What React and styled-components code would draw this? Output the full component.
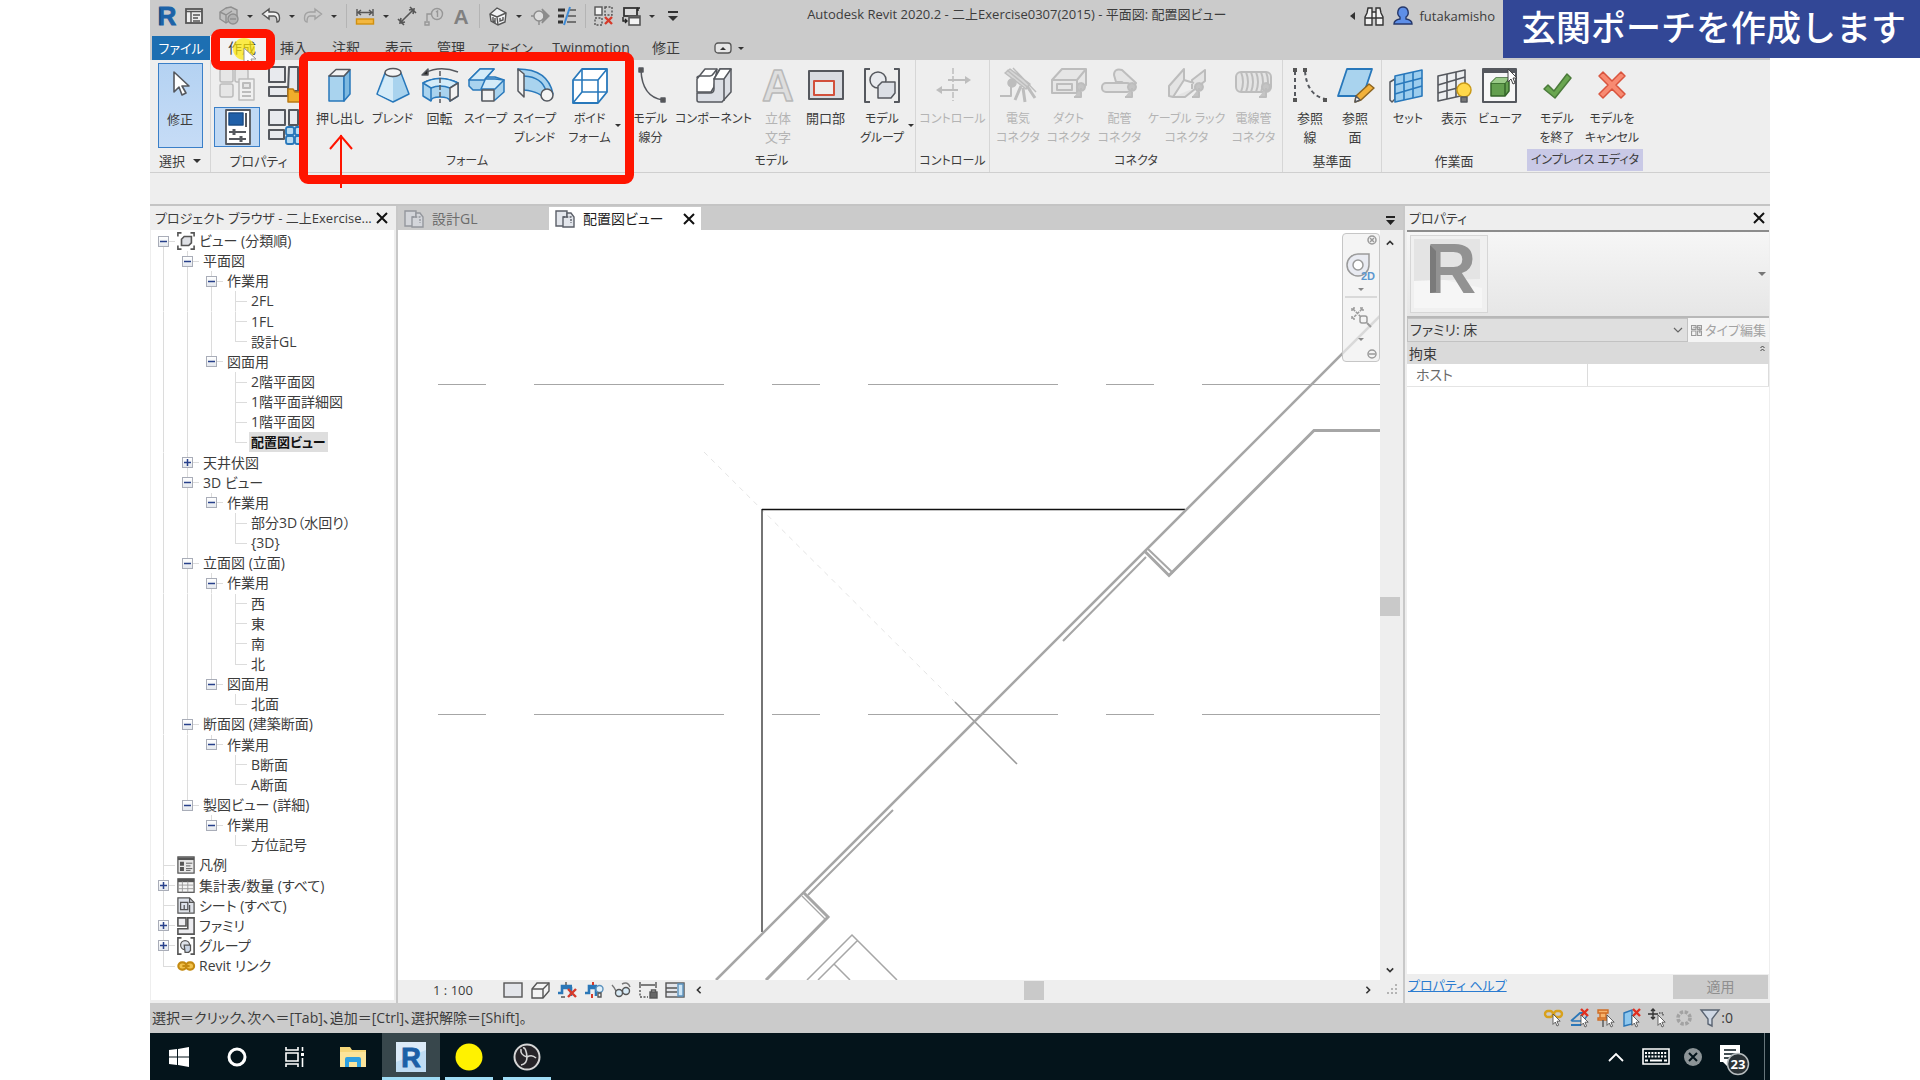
import React from 'react';
import styled, { createGlobalStyle, css } from 'styled-components';

const GlobalStyle = createGlobalStyle`
  * {
    box-sizing: border-box;
  }

  body {
    margin: 0;
    background: #ffffff;
    color: #3c3c3c;
    font-family: "Open Sans", "Noto Sans CJK JP", sans-serif;
    font-size: 14px;
    line-height: 20px;
    font-feature-settings: "palt";
  }

  button, input, select {
    font: inherit;
    font-feature-settings: inherit;
    color: inherit;
    margin: 0;
    padding: 0;
    border: 0;
    background: none;
  }

  svg {
    display: block;
    flex: none;
    overflow: visible;
  }
`;

const Page = styled.div`
  position: relative;
  min-height: 100vh;
  overflow: hidden;
`;

const Window = styled.div`
  position: relative;
  display: flex;
  flex-direction: column;
  height: 100vh;
  margin: 0 150px;
  background: #eeeeee;
`;

/* ---------- title bar ---------- */

const TitleBar = styled.header`
  display: flex;
  align-items: center;
  height: 36px;
  padding: 0 275px 4px 7px;
  background: #cbcbcb;
`;

const QuickAccess = styled.div`
  display: flex;
  align-items: center;
  gap: 7px;
`;

const QuickButton = styled.button`
  display: flex;
  width: ${(p) => (p.$arrow ? '8px' : '20px')};
  justify-content: center;
  margin-left: ${(p) => (p.$spaced ? '8px' : '0')};
`;

const QuickDivider = styled.span`
  width: 1px;
  height: 24px;
  margin: 0 1px;
  background: #b4b4b4;
`;

const Title = styled.h1`
  flex: 1;
  margin: 0;
  padding-bottom: 5px;
  font-size: 13px;
  font-weight: 400;
  line-height: 20px;
  text-align: center;
  white-space: nowrap;
`;

const Account = styled.div`
  display: flex;
  align-items: center;
  gap: 9px;
  font-size: 13px;
`;

const AccountButton = styled.button`
  display: flex;
  align-items: center;
  gap: 6px;
`;

/* ---------- ribbon ---------- */

const Tabs = styled.nav`
  display: flex;
  height: 24px;
  padding-left: 2px;
  background: #cbcbcb;
`;

const Tab = styled.button`
  width: ${(p) => p.$w}px;
  font-size: ${(p) => (p.$kana ? '13px' : '14px')};
  line-height: 24px;
  white-space: nowrap;
  ${(p) => p.$file && css`
    background: #1d6fb2;
    color: #ffffff;
  `}
  ${(p) => p.$active && css`
    background: #f2f2f2;
  `}
`;

const TabToggle = styled.button`
  display: flex;
  align-items: center;
  gap: 6px;
  margin-left: 26px;
`;

const Ribbon = styled.div`
  display: flex;
  height: 113px;
  background: #eeeeee;
  border-bottom: 1px solid #cfcfcf;
`;

const RibbonPanel = styled.section`
  display: flex;
  flex-direction: column;
  width: ${(p) => p.$w}px;
  border-right: 1px solid ${(p) => (p.$last ? 'transparent' : '#d6d6d6')};
`;

const PanelTools = styled.div`
  display: flex;
  flex: 1;
  justify-content: center;
`;

const PanelName = styled.div`
  display: flex;
  align-items: center;
  justify-content: center;
  gap: 8px;
  height: 22px;
  font-size: ${(p) => (p.$kana ? '12px' : '13px')};
  line-height: 22px;
  white-space: nowrap;
  ${(p) => p.$accent && css`
    background: #c9c9e6;
    margin: 0 0 1px 0;
  `}
`;

const Tool = styled.button`
  position: relative;
  display: flex;
  flex-direction: column;
  align-items: center;
  width: ${(p) => p.$w}px;
  padding-top: 6px;
  font-size: ${(p) => (p.$kana ? '12px' : '13px')};
  line-height: 19px;
  white-space: nowrap;
  color: ${(p) => (p.disabled ? '#b4b4b4' : '#3c3c3c')};
`;

const ToolLabel = styled.span`
  margin-top: 5px;
  white-space: pre;
`;

const ToolArrow = styled.span`
  position: absolute;
  right: 0;
  top: 64px;
`;

const ModifyTool = styled(Tool)`
  height: 85px;
  margin-top: 3px;
  padding-top: 3px;
  border: 1px solid #3a7fc8;
  background: linear-gradient(#b4d2f2, #c6dcf6);
`;

const PropertyTools = styled.div`
  display: grid;
  flex: 1;
  grid-template-columns: 46px 46px;
  grid-auto-rows: 40px;
  gap: 3px 2px;
  padding: 4px 0 0 3px;
`;

const PropertyTool = styled.button`
  display: flex;
  align-items: center;
  justify-content: center;
  border: 1px solid ${(p) => (p.$active ? '#3a7fc8' : 'transparent')};
  background: ${(p) => (p.$active ? '#c0d9f4' : 'none')};
`;

const OptionsBar = styled.div`
  height: 33px;
  background: #eeeeee;
  border-bottom: 2px solid #c4c4c4;
`;

/* ---------- docked panels ---------- */

const Workspace = styled.div`
  display: flex;
  flex: 1;
  min-height: 0;
`;

const PanelHeader = styled.div`
  display: flex;
  align-items: center;
  justify-content: space-between;
  height: 24px;
  padding: 0 ${(p) => (p.$tight ? '0 0 2px' : '4px')};
  font-size: 13px;
  line-height: 24px;
  white-space: nowrap;
`;

const CloseButton = styled.button`
  display: flex;
  padding: 4px;
`;

const Browser = styled.aside`
  display: flex;
  flex-direction: column;
  width: 248px;
  padding: 0 2px 3px 1px;
  border-right: 2px solid #c8c8c8;
`;

const Tree = styled.ul`
  display: flex;
  flex: 1;
  flex-direction: column;
  margin: 0;
  padding: 1px 0 24px;
  list-style: none;
  background: #ffffff;
`;

const TreeRow = styled.li`
  display: flex;
  flex: 1;
  align-items: stretch;
  min-height: 0;
`;

const line = 'linear-gradient(#dcdcdc, #dcdcdc) no-repeat';
const up = `${line} 50% 0 / 1px 50%`;
const down = `${line} 50% 100% / 1px 50%`;
const side = `${line} 100% 50% / 50% 1px`;
const guides = {
  b: `${down}, ${side}`,
  v: `${up}, ${down}`,
  t: `${up}, ${down}, ${side}`,
  l: `${up}, ${side}`,
  e: 'none',
};

const Guide = styled.span`
  display: flex;
  align-items: center;
  justify-content: center;
  width: 24px;
  background: ${(p) => guides[p.$kind]};
`;

const Expander = styled.button`
  display: flex;
  align-items: center;
  justify-content: center;
  width: 11px;
  height: 11px;
  border: 1px solid #a9adb8;
  background: linear-gradient(#ffffff, #e4e8ee);
`;

const TreeLabel = styled.span`
  display: flex;
  align-items: center;
  align-self: center;
  gap: 4px;
  height: 20px;
  margin-left: 2px;
  padding: 0 2px;
  white-space: nowrap;
  ${(p) => p.$icon && css`
    margin-left: 0;
  `}
  ${(p) => p.$selected && css`
    background: #dedede;
    font-size: 13px;
    font-weight: 700;
    color: #111111;
  `}
`;

const View = styled.main`
  display: flex;
  flex: 1;
  flex-direction: column;
  min-width: 0;
  padding-bottom: 3px;
`;

const DocumentTabs = styled.div`
  display: flex;
  align-items: flex-end;
  height: 24px;
  background: #cbcbcb;
`;

const DocumentTab = styled.button`
  display: flex;
  align-items: center;
  gap: 8px;
  width: ${(p) => p.$w}px;
  height: 23px;
  padding: 0 6px;
  color: ${(p) => (p.$active ? '#1e1e1e' : '#6c6c6c')};
  background: ${(p) => (p.$active ? '#ffffff' : 'none')};

  svg:last-child:not(:first-child) {
    margin-left: auto;
  }
`;

const TabMenu = styled.button`
  margin: 0 7px 4px auto;
`;

const ViewBody = styled.div`
  display: flex;
  flex: 1;
  min-height: 0;
`;

const Canvas = styled.div`
  position: relative;
  flex: 1;
  min-width: 0;
  overflow: hidden;
  background: #ffffff;
`;

const Drawing = styled.svg`
  width: 100%;
  height: 100%;
  fill: none;
  stroke: #a6a6a6;
`;

const NavigationBar = styled.div`
  position: absolute;
  top: 3px;
  right: 0;
  width: 38px;
  height: 129px;
  border: 1px solid #c6c6c6;
  border-radius: 4px;
  background: rgba(240, 240, 240, 0.7);
`;

const VerticalScroll = styled.div`
  display: flex;
  flex-direction: column;
  align-items: center;
  justify-content: space-between;
  width: 23px;
  padding: 9px 3px 6px 0;
  background: #eeeeee;
`;

const Thumb = styled.div`
  width: 20px;
  height: 19px;
  background: #c9c9c9;
`;

const ViewControls = styled.div`
  display: flex;
  align-items: center;
  gap: 7px;
  height: 20px;
  padding: 0 4px 0 35px;
  background: #eeeeee;
`;

const Scale = styled.button`
  width: 40px;
  margin-right: 23px;
  font-size: 13px;
  white-space: nowrap;
`;

const HorizontalScroll = styled.div`
  display: flex;
  flex: 1;
  align-items: center;
  justify-content: space-between;
  padding: 0 8px 0 3px;
`;

const Properties = styled.aside`
  display: flex;
  flex-direction: column;
  width: 367px;
  padding: 0 1px 2px 2px;
  border-left: 2px solid #c8c8c8;
`;

const TypeSelector = styled.button`
  display: flex;
  align-items: center;
  justify-content: space-between;
  height: 88px;
  padding: 0 3px;
  border-top: 2px solid #8c8c8c;
  border-bottom: 2px solid #b8b8b8;
  background: linear-gradient(#f6f6f6, #e6e6e6);
`;

const FamilyRow = styled.div`
  display: flex;
  height: 24px;
  background: #f4f4f4;
`;

const FamilyBox = styled.label`
  display: flex;
  flex: 1;
  align-items: center;
  padding-right: 4px;
  border: 1px solid #c2c2c2;
  background: #dfdfdf;
`;

const FamilySelect = styled.select`
  flex: 1;
  appearance: none;
  padding-left: 2px;
`;

const EditType = styled.button`
  display: flex;
  align-items: center;
  justify-content: center;
  gap: 3px;
  width: 81px;
  font-size: 13px;
  color: #a3a3a3;
`;

const PropertyArea = styled.div`
  flex: 1;
  background: #ffffff;
`;

const PropertyTable = styled.table`
  width: 100%;
  border-collapse: collapse;

  th, td {
    height: 22px;
    padding: 0 2px;
    font-weight: 400;
    text-align: left;
    line-height: 21px;
  }

  thead th {
    background: #dadada;
  }

  thead svg {
    float: right;
    margin: 2px 2px 0 0;
  }

  tbody th {
    width: 50%;
    padding-left: 9px;
    color: #6a6a6a;
    border-right: 1px solid #dcdcdc;
    border-bottom: 1px solid #e4e4e4;
  }

  tbody td {
    border-right: 1px solid #dcdcdc;
    border-bottom: 1px solid #e4e4e4;
  }
`;

const CellInput = styled.input`
  width: 100%;
  height: 18px;
`;

const PropertiesFooter = styled.div`
  display: flex;
  align-items: flex-start;
  justify-content: space-between;
  height: 27px;
  padding: 1px 1px 0;
`;

const HelpLink = styled.a`
  font-size: 13px;
  color: #2a7bd0;
`;

const ApplyButton = styled.button`
  width: 95px;
  height: 24px;
  background: #cbcbcb;
  color: #8f8f8f;
`;

const StatusBar = styled.footer`
  display: flex;
  align-items: center;
  justify-content: space-between;
  height: 30px;
  padding: 0 37px 0 2px;
  background: #cbcbcb;
`;

const StatusTools = styled.div`
  display: flex;
  align-items: center;
  gap: 6px;
`;

const FilterCount = styled.span`
  margin-left: -5px;
`;

/* ---------- task bar ---------- */

const Taskbar = styled.div`
  display: flex;
  justify-content: space-between;
  height: 47px;
  background: #04141b;
`;

const TaskGroup = styled.div`
  display: flex;
`;

const TaskButton = styled.button`
  display: flex;
  align-items: center;
  justify-content: center;
  width: 58px;
  background: ${(p) => (p.$active ? '#38474c' : 'none')};
  ${(p) => p.$running && css`
    background: linear-gradient(#9fdcf5, #9fdcf5) no-repeat 50% 100% / 48px 3px;
  `}
  ${(p) => p.$active && css`
    background: linear-gradient(#9fdcf5, #9fdcf5) no-repeat 50% 100% / 58px 3px #38474c;
  `}
`;

const Tray = styled.div`
  display: flex;
  align-items: center;
  gap: 14px;
  padding-right: 5px;
`;

const TrayButton = styled.button`
  display: flex;
`;

const ShowDesktop = styled.span`
  width: 1px;
  height: 47px;
  background: #66757b;
`;

/* ---------- lesson annotations over the window ---------- */

const Caption = styled.div`
  position: absolute;
  top: 0;
  right: 0;
  padding: 0 14px 6px 18px;
  background: #324796;
  color: #ffffff;
  font-family: "Noto Sans CJK JP", sans-serif;
  font-size: 35px;
  font-weight: 500;
  font-feature-settings: normal;
  line-height: 52px;
  white-space: nowrap;
`;

const Highlight = styled.div`
  position: absolute;
  top: ${(p) => p.$top}px;
  left: ${(p) => p.$left}px;
  width: ${(p) => p.$w}px;
  height: ${(p) => p.$h}px;
  border: 9px solid #ff1400;
  border-radius: 9px;
  pointer-events: none;
`;

const Pointer = styled.svg`
  position: absolute;
  top: ${(p) => p.$top}px;
  left: ${(p) => p.$left}px;
  pointer-events: none;
`;

/* ---------- icons ---------- */

const Small = ({ children, size = 20 }) => (
  <svg width={size} height={size} viewBox="0 0 20 20" fill="none" stroke="#555" strokeWidth="1.4" aria-hidden="true">
    {children}
  </svg>
);

const Large = ({ children }) => (
  <svg width="38" height="38" viewBox="0 0 38 38" fill="none" stroke="#55585e" strokeWidth="1.5" strokeLinejoin="round" aria-hidden="true">
    {children}
  </svg>
);

const Caret = ({ color = '#333', size = 8 }) => (
  <svg width={size} height={size / 2} viewBox="0 0 8 4" aria-hidden="true">
    <path d="M0 0h8L4 4z" fill={color} />
  </svg>
);

const Cross = () => (
  <svg width="12" height="12" viewBox="0 0 12 12" stroke="#111" strokeWidth="2" aria-hidden="true">
    <path d="M1 1l10 10M11 1L1 11" />
  </svg>
);

const Chevron = ({ d, size = 10, color = '#333', w = 2 }) => (
  <svg width={size} height={size} viewBox="0 0 10 10" fill="none" stroke={color} strokeWidth={w} aria-hidden="true">
    <path d={d} />
  </svg>
);

const Cursor = <path d="M0 0v13l3-3 2 5 2-1-2-5h4z" fill="#fff" stroke="#444" strokeWidth="1" />;

const RevitLogo = ({ size, fill = '#1c63a8' }) => (
  <svg width={size} height={size} viewBox="0 0 24 24" aria-hidden="true">
    <text x="12" y="22" textAnchor="middle" fontFamily="Liberation Sans" fontWeight="700" fontSize="28" fill={fill} stroke={fill}>R</text>
    <path d="M3 2v20h2V4z" fill="#000" opacity="0.25" />
  </svg>
);

const quick = {
  home: <RevitLogo size={22} />,
  sheet: <Small><rect x="2" y="3" width="16" height="14" fill="#eee" strokeWidth="1.8" /><path d="M2 5.500h16M7 6v11M9 9h7M9 12h5M9 15h7" /></Small>,
  box: (
    <Small>
      <g stroke="#8f8f8f" fill="#c0c0c0">
        <path d="M1 6l6-4 6 3v8l-6 4-6-4z" />
        <path d="M7 2l5-1 6 3v7l-5 2" />
        <path d="M1 6l6 3 6-4M7 9v8" />
        <circle cx="14" cy="13" r="5" fill="#b2b2b2" />
        <path d="M11 13h6" />
      </g>
    </Small>
  ),
  undo: <Small><path d="M8 3L1.500 8 8 13v-3h5q3 0 3 6 2.500 0 2.500-4 0-6-6-6H8z" fill="#f2f2f2" /></Small>,
  redo: <Small><path d="M12 3l6.500 5L12 13v-3H7q-3 0-3 6-2.500 0-2.500-4 0-6 6-6H12z" stroke="#a2a2a2" /></Small>,
  measure: <Small><rect x="1.500" y="13" width="17" height="5" fill="#f3b73f" stroke="#d09010" /><path d="M2 3v7M18 3v7M3 6.500h14M6 4L3 6.500 6 9M14 4l3 2.500L14 9" /></Small>,
  dimension: <Small><path d="M3 17L17 3M1 13l6 6M13 1l6 6M4 12l-1 5 5-1M12 4l5-1-1 5" strokeWidth="1.600" /></Small>,
  tag: <Small><g stroke="#979797"><circle cx="13" cy="8" r="5.500" /><path d="M12 6l1.500-1v6M8 8H3v7M1 16h4v3H1z" /></g></Small>,
  text: <Small><text x="10" y="18" textAnchor="middle" fontFamily="Liberation Sans" fontWeight="700" fontSize="21" fill="#808080" stroke="none">A</text></Small>,
  house: <Small><path d="M2 8l7-6 9 5-1 9-7 3-7-4z" fill="#f4f5f7" /><path d="M2 8l7 3 9-4M9 11l1 8M5 11v4l2 1v-4M12 12v3l3-1v-3" /></Small>,
  section: <Small><circle cx="9" cy="10" r="5" stroke="#8c8c8c" fill="#ddd" /><path d="M12 3l7 7-7 7q4-7 0-14zM9 15v4M1 10h3" fill="#8c8c8c" stroke="#8c8c8c" /></Small>,
  lines: <Small><path d="M1 4h7M1 10h6M1 16h5" stroke="#333" strokeWidth="3" /><path d="M12 4h7M11 10h8M10 16h9" /><path d="M13 1L7 19" stroke="#3c8bd8" strokeWidth="2" /></Small>,
  hidden: <Small><rect x="1" y="1" width="7" height="8" fill="#f4f4f4" /><rect x="11" y="1" width="7" height="8" strokeDasharray="2 1.500" /><rect x="1" y="12" width="7" height="7" strokeDasharray="2 1.500" /><path d="M11 11l7 7M18 11l-7 7" stroke="#d63a2a" strokeWidth="2.400" /></Small>,
  swap: <Small><rect x="3" y="2" width="13" height="8" fill="#ddd" strokeWidth="1.800" stroke="#333" /><rect x="8" y="10" width="11" height="9" fill="#f4f4f4" strokeWidth="1.600" /><path d="M8 11.500h11" strokeWidth="2" /><path d="M2 11v4h4M4 13l2 2-2 2M17 5V2h2" stroke="#222" /></Small>,
  more: <Small><path d="M5 6h10" strokeWidth="2" stroke="#333" /><path d="M5 10h10l-5 5z" fill="#333" stroke="none" /></Small>,
};

const blue = '#a9d3ee';
const pale = '#d4ebf8';
const edge = '#2878bb';

const Connector = <path d="M31 22v9H24M31 17a4 4 0 1 1-.1 0" fill="#c4c4c4" stroke="#bdbdbd" strokeWidth="2" />;

const art = {
  arrow: <Large><path d="M13 5v20l5-5 3 8 4-2-4-7h7z" fill="#fff" strokeWidth="1.600" /></Large>,
  extrusion: <Large><path d="M8 10h15v25H8z" fill={blue} stroke={edge} /><path d="M23 10l6-6v24l-6 7z" fill="#7db9e0" stroke={edge} /><path d="M8 10l7-6.500h14L23 10z" fill="#f3f3f3" /></Large>,
  blend: <Large><path d="M11 7L3 28l16 8 16-8-8-21z" fill={blue} stroke={edge} /><path d="M12 9L4 28l15 7V12z" fill={pale} stroke="none" /><ellipse cx="19" cy="6.500" rx="8" ry="4" fill="#f4f4f4" /></Large>,
  revolve: <Large><path d="M2 17q17-9 35 0v13l-8 5q-1-4-10-4t-9 4l-8-5z" fill={blue} stroke={edge} /><path d="M2 17q17-9 35 0l-8 5q-10-4-19 0z" fill={pale} stroke={edge} /><path d="M10 22v13" stroke={edge} /><path d="M29 22l8-5v13l-8 5z" fill="#f2f2f2" /><path d="M19 5v32" strokeDasharray="5 2" /><path d="M4 7q15-8 33-1" /><path d="M1 9l6-6v6z" fill="#222" /></Large>,
  sweep: <Large><path d="M2 14L13 3h14l-7 8h8l9 3v12l-9 8H15V24H6l-4-4z" fill={blue} stroke={edge} /><path d="M2 14L13 3h14l-9 10h10l9 1-9 9H14l4-9z" fill={pale} stroke={edge} /><rect x="15" y="24" width="12" height="11" fill="#f2f2f2" /></Large>,
  sweptBlend: <Large><path d="M2 3q30 0 35 25l-9 6q-2-8-20-10z" fill={blue} stroke={edge} /><path d="M8 10q18 1 22 15" stroke={edge} fill="none" /><path d="M2 3l6 5v23l-6-6z" fill="#f2f2f2" /><circle cx="31" cy="29" r="6" fill="#f4f4f4" /></Large>,
  voidForm: <Large><path d="M2 14L11 3h25v23l-9 11H2z" fill="#fff" stroke={edge} strokeWidth="1.800" /><path d="M2 14h25v23M27 14l9-11M11 3v23h25M11 26L2 37" stroke={edge} strokeWidth="1.600" /></Large>,
  modelLine: <Large><path d="M9 4q1 27 22 30" /><path d="M1 4v30" strokeWidth="2" /><rect x="7" y="2" width="4" height="4" fill="#555" /><rect x="29" y="32" width="4" height="4" fill="#555" /></Large>,
  component: <Large><path d="M2 13l8-10h12l-3 18-3 5H2z" fill="#fff" /><path d="M2 12q0-2 3-2h10q2 0 4-3l3-4" /><path d="M2 27h13q4 0 4-4V13l6-10h11v23l-9 10H4q-2 0-2-2z" fill="#dcdfe5" /><path d="M19 13l6-10h11l-7 10zM29 13v22" fill="#fff" /></Large>,
  modelText: <Large><text x="19" y="35" textAnchor="middle" fontFamily="Liberation Sans" fontWeight="700" fontSize="44" fill="#dedede" stroke="#b9b9b9" strokeWidth="1.500">A</text></Large>,
  opening: <Large><rect x="2" y="5" width="34" height="28" fill="#d9dce2" strokeWidth="2" /><rect x="7" y="15" width="20" height="14" fill="#eee" stroke="#d2503c" strokeWidth="2" /></Large>,
  group: <Large><path d="M7 3H2v33h5M31 3h5v33h-5" strokeWidth="2" /><circle cx="15" cy="14" r="8" fill="#e8eaee" /><path d="M15 20l4-4h13v11l-4 5H15z" fill="#dcdfe5" /></Large>,
  control: <Large><path d="M19 2v33" stroke="#bdbdbd" strokeDasharray="6 2" /><path d="M14 14h17M7 24h17" stroke="#bdbdbd" strokeWidth="2" /><path d="M31 10l6 4-6 4zM8 20l-6 4 6 4z" fill="#bdbdbd" stroke="none" /></Large>,
  electric: <Large><g stroke="#bdbdbd" fill="#d6d6d6"><path d="M8 4l24 20M14 2l23 24M6 7l5-4 20 15-4 5z" /><path d="M24 22l2 14M28 20l8 12M22 20l-6 14" strokeWidth="3" /><circle cx="13" cy="17" r="4" fill="#bdbdbd" /><path d="M12 21v9H1" fill="none" strokeWidth="2" /></g></Large>,
  duct: <Large><g stroke="#bdbdbd"><path d="M2 14L12 3h24v16l-9 8H2z" fill="#e6e6e6" strokeWidth="2" /><path d="M2 14h25l9-11M27 14v13M7 18h15v6H7z" strokeWidth="2" />{Connector}</g></Large>,
  pipe: <Large><g stroke="#bdbdbd" strokeWidth="2" fill="#e4e4e4"><path d="M13 9q0-7 8-5l14 13-6 7-8-8h-6z" /><rect x="1" y="17" width="29" height="9" rx="4" />{Connector}</g></Large>,
  cable: <Large><g stroke="#bdbdbd" strokeWidth="2" fill="#e4e4e4"><path d="M1 20L16 3v11L5 31l-4-1zM16 14l10 3M5 31h12l20-16V4L24 14v9" />{Connector}</g></Large>,
  conduit: <Large><g stroke="#bdbdbd" strokeWidth="2" fill="#e4e4e4"><rect x="1" y="6" width="35" height="20" rx="5" /><path d="M6 6q4 10 0 20M11 6q4 10 0 20M16 6q4 10 0 20M21 6q4 10 0 20M26 6q4 10 0 20M31 6q4 10 0 20" fill="none" />{Connector}</g></Large>,
  referenceLine: <Large><path d="M4 5v28M14 5q2 24 20 28" strokeWidth="2" strokeDasharray="4 3" /><path d="M2 2h4v4H2zM12 2h4v4h-4zM2 32h4v4H2zM32 32h4v4h-4z" fill="#555" stroke="none" /></Large>,
  referencePlane: <Large><path d="M11 3h25L27 30H2z" fill={blue} stroke={edge} strokeWidth="1.800" /><path d="M19 36l1-6 13-12 5 4-13 12z" fill="#f2b13a" stroke="#8c6420" /><path d="M19 36l1-6 4 4z" fill="#fff" /></Large>,
  set: <Large><path d="M1 16l5-3v20l-3 3-2-2z" fill="#eee" /><path d="M6 10l27-6v26L6 36z" fill="#9ccdee" stroke={edge} strokeWidth="1.600" /><path d="M15 8v26M24 6v26M6 19l27-7M6 28l27-8" stroke={edge} strokeWidth="1.600" /></Large>,
  show: <Large><path d="M3 10l27-6v25L3 35z" fill="#eceef0" strokeWidth="1.600" /><path d="M12 8v25M21 6v25M3 19l27-8M3 27l27-7" strokeWidth="1.600" /><circle cx="29" cy="24" r="7" fill="#ffd84a" stroke="#c99a18" /><path d="M26 31h6v5h-6z" fill="#777" /></Large>,
  viewer: <Large><rect x="2" y="3" width="33" height="33" fill="#f7f7f7" strokeWidth="2" /><path d="M2 5h33" strokeWidth="4" /><path d="M10 17l5-5h13v13l-4 5H10z" fill="#64a04f" stroke="#35662a" /><path d="M10 17h14l4-5M24 17v13" stroke="#35662a" /><path d="M15 12h13l-4 5H10z" fill="#9bcb88" stroke="none" /><g transform="translate(27 3)">{Cursor}</g></Large>,
  finish: <Large><path d="M6 23l4-4 6 6L29 8l4 4-16 20z" fill="#6aa650" stroke="#4a7a3a" /></Large>,
  cancel: <Large><path d="M10 6l9 9 9-9 4 4-9 9 9 9-4 4-9-9-9 9-4-4 9-9-9-9z" fill="#f88a72" stroke="#d9543e" /></Large>,
};

const propertyArt = [
  <Large key="a"><g stroke="#bcbcbc" fill="#e6e6e6"><rect x="2" y="4" width="13" height="13" rx="2" /><rect x="17" y="4" width="13" height="13" rx="2" /><rect x="2" y="19" width="13" height="13" rx="2" /><rect x="21" y="14" width="15" height="21" fill="#f0f0f0" /><path d="M25 18h7v5h-7zM24 27h9M24 31h9" strokeWidth="2" /></g></Large>,
  <Large key="b"><path d="M3 2h16v15H3zM3 22h19v9H3zM23 2h9v24H22z" fill="#e8eaee" strokeWidth="2" /><path d="M22 24h5l2 3h9v10H22z" fill="#f0ad2c" stroke="#b87a14" /></Large>,
  <Large key="c"><rect x="8" y="2" width="24" height="34" fill="#fff" strokeWidth="1.800" /><rect x="11" y="5" width="14" height="12" fill="#1f5fa8" stroke="#1b4e88" /><path d="M28 5v14M11 24h17M11 31h17" strokeWidth="2" /><path d="M16 21v6M23 28v6" strokeWidth="3" /></Large>,
  <Large key="d"><path d="M3 2h16v15H3zM3 22h15v9H3zM23 2h9v15h-9z" fill="#e8eaee" strokeWidth="2" /><g fill="#b9dcf2" stroke={edge} strokeWidth="1.800"><rect x="20" y="19" width="8" height="8" rx="2" /><rect x="29" y="19" width="8" height="8" rx="2" /><rect x="20" y="28" width="8" height="8" rx="2" /><rect x="29" y="28" width="8" height="8" rx="2" /></g></Large>,
];

const treeArt = {
  views: <Small size={18}><path d="M1 5V1h4M15 1h4v4M19 15v4h-4M5 19H1v-4" strokeWidth="1.800" /><path d="M5 8l3-3h8v7l-3 3H5z" fill="#dfe1e6" strokeWidth="1.800" /></Small>,
  legend: <Small size={18}><rect x="1" y="1" width="18" height="18" fill="#e8e8e8" /><path d="M1 3h18" strokeWidth="3" /><path d="M4 7h3v3H4zM4 13h3v3H4z" fill="#555" /><path d="M10 8h7M10 11h5M10 14h7M10 16h5" strokeWidth="1" /></Small>,
  schedule: <Small size={18}><rect x="1" y="2" width="18" height="15" fill="#f4f4f4" /><path d="M1 4h18" strokeWidth="3.500" /><path d="M1 9h18M1 13h18M6 5v12M12 5v12" stroke="#999" strokeWidth="1" /></Small>,
  sheet: <Small size={18}><path d="M1 1h13l5 5v12H1z" fill="#dfe3ea" /><path d="M4 6h8v8H4zM8 9v5M14 1v5h5M14 9v8" /></Small>,
  family: <Small size={18}><path d="M1 1h9v9H1zM1 13h11V1h7v18H1z" fill="#ececf0" strokeWidth="1.800" /></Small>,
  group: <Small size={18}><path d="M5 1H1v18h4M15 1h4v18h-4" strokeWidth="1.800" /><circle cx="9" cy="9" r="5" fill="#dfe3ea" /><path d="M8 9h7v6l-2 2H9z" fill="#c9d4e4" /></Small>,
  link: <Small size={18}><g stroke="#c48a10" strokeWidth="2.400"><rect x="1.500" y="6" width="9" height="8" rx="4" fill="#f2c24a" /><rect x="10" y="6" width="9" height="8" rx="4" fill="#f2c24a" /><path d="M6 10h8" /></g></Small>,
};

const viewArt = [
  <Small key="1"><rect x="1" y="3" width="18" height="14" fill="#e3e5ea" /></Small>,
  <Small key="2"><path d="M2 9l5-6h12v8l-6 7H2z" fill="#f4f4f4" /><path d="M2 9h11l6-6M13 9v9" /></Small>,
  <Small key="3"><path d="M1 13h4V6h10M5 8h9v8" stroke="#2b77b8" strokeWidth="2.600" /><path d="M9 2v3M4 17h4" /><path d="M11 9l8 8M19 9l-8 8" stroke="#d63a2a" strokeWidth="2.400" /></Small>,
  <Small key="4"><path d="M1 13h4V6h8M5 8h7v8" stroke="#2b77b8" strokeWidth="2.600" /><path d="M9 2v3M8 14v4" stroke="#d63a2a" strokeWidth="2" /><circle cx="15.500" cy="9" r="3.500" fill="#e1f0fa" stroke="#5c92bd" /><path d="M14 13h3v4h-3z" /></Small>,
  <Small key="5"><path d="M1 5q2 2 4 6M11 4q6-3 8 3" stroke="#777" /><circle cx="8" cy="13" r="3.500" fill="#d8ebf7" /><circle cx="15" cy="11" r="3.500" fill="#d8ebf7" /></Small>,
  <Small key="6"><path d="M2 2v6M18 2v6M3 5h14" /><path d="M2 10v7h8" strokeDasharray="2 1.500" /><rect x="12" y="12" width="7" height="6" fill="#666" /><path d="M13.500 12v-2h4v2" /></Small>,
  <Small key="7"><rect x="1" y="3" width="18" height="14" fill="#e3e5ea" /><path d="M1 8h11M1 12h11" /><path d="M13 4h5v12h-5z" fill="#cfe6f6" stroke="#5c92bd" /></Small>,
];

const at = (x, y, node) => <g transform={`translate(${x} ${y}) scale(.8)`}>{node}</g>;
const redX = <path d="M11 1l7 7M18 1l-7 7" stroke="#e03020" strokeWidth="2.400" />;

const statusArt = [
  <Small key="1"><rect x="1" y="3" width="8" height="6" rx="3" stroke="#d8a11c" strokeWidth="2.400" /><rect x="10" y="3" width="8" height="6" rx="3" stroke="#d8a11c" strokeWidth="2.400" />{at(9, 6, Cursor)}</Small>,
  <Small key="2"><path d="M1 13L10 5h6M1 17h10" stroke="#2b77b8" strokeWidth="1.800" /><path d="M2 13h11l4-5" stroke="#2b77b8" />{redX}{at(11, 7, Cursor)}</Small>,
  <Small key="3"><path d="M2 2h10v3H2zM4 5h6v5H4zM2 10h11v2H2z" fill="#f7b36b" stroke="#cf6d24" /><path d="M7 12v7" />{at(11, 7, Cursor)}</Small>,
  <Small key="4"><path d="M2 5l8-3v14l-8 2z" fill="#8fc8ee" stroke="#2b77b8" />{redX}{at(10, 7, Cursor)}</Small>,
  <Small key="5"><path d="M5 1v10M0 6h10M3 3l2-2 2 2M3 9l2 2 2-2" stroke="#333" /><path d="M11 5h4v3" strokeDasharray="1.500 1" />{at(10, 7, Cursor)}</Small>,
  <Small key="6"><circle cx="10" cy="10" r="6" stroke="#a2a2a2" strokeWidth="3.600" strokeDasharray="3.200 1.500" /></Small>,
  <Small key="7"><path d="M1 2h18l-7 9v7l-4-2v-5z" fill="#cfd8e4" stroke="#5a6472" /></Small>,
];

/* ---------- data ---------- */

const quickItems = [
  'home', 'sheet', 'box', '>', 'undo', '>', 'redo', '>', '|',
  'measure', '>', 'dimension', 'tag', 'text', '|',
  'house', '>', 'section', 'lines', '|', 'hidden', 'swap', '>', 'more',
];

const tabs = [
  ['ファイル', 58], ['作成', 64], ['挿入', 40], ['注釈', 64], ['表示', 42],
  ['管理', 62], ['アドイン', 56], ['Twinmotion', 106], ['修正', 44],
];

const panels = [
  {
    name: 'フォーム', w: 321, tools: [
      ['extrusion', '押し出し', 53], ['blend', 'ブレンド', 52], ['revolve', '回転', 42],
      ['sweep', 'スイープ', 50], ['sweptBlend', 'スイープ\nブレンド', 48], ['voidForm', 'ボイド\nフォーム', 62, 'menu'],
    ],
  },
  {
    name: 'モデル', w: 288, tools: [
      ['modelLine', 'モデル\n線分', 42], ['component', 'コンポーネント', 84], ['modelText', '立体\n文字', 45, 'off'],
      ['opening', '開口部', 50], ['group', 'モデル\nグループ', 63, 'menu'],
    ],
  },
  { name: 'コントロール', w: 74, tools: [['control', 'コントロール', 72, 'off']] },
  {
    name: 'コネクタ', w: 293, tools: [
      ['electric', '電気\nコネクタ', 51, 'off'], ['duct', 'ダクト\nコネクタ', 50, 'off'], ['pipe', '配管\nコネクタ', 52, 'off'],
      ['cable', 'ケーブル ラック\nコネクタ', 82, 'off'], ['conduit', '電線管\nコネクタ', 52, 'off'],
    ],
  },
  { name: '基準面', w: 99, tools: [['referenceLine', '参照\n線', 46], ['referencePlane', '参照\n面', 44]] },
  { name: '作業面', w: 145, last: true, tools: [['set', 'セット', 46], ['show', '表示', 46], ['viewer', 'ビューア', 46]] },
  { name: 'インプレイス エディタ', w: 117, last: true, accent: true, tools: [['finish', 'モデル\nを終了', 54], ['cancel', 'モデルを\nキャンセル', 56]] },
];

const isKana = (label) => /[ァ-ー]{3}/.test(label);

// guides, label, expander, icon
const rows = [
  ['b', 'ビュー (分類順)', '-', 'views'],
  ['vt', '平面図', '-'],
  ['vvt', '作業用', '-'],
  ['vvvt', '2FL'],
  ['vvvt', '1FL'],
  ['vvvl', '設計GL'],
  ['vvl', '図面用', '-'],
  ['vvet', '2階平面図'],
  ['vvet', '1階平面詳細図'],
  ['vvet', '1階平面図'],
  ['vvel', '配置図ビュー'],
  ['vt', '天井伏図', '+'],
  ['vt', '3D ビュー', '-'],
  ['vvl', '作業用', '-'],
  ['vvet', '部分3D（水回り）'],
  ['vvel', '{3D}'],
  ['vt', '立面図 (立面)', '-'],
  ['vvt', '作業用', '-'],
  ['vvvt', '西'],
  ['vvvt', '東'],
  ['vvvt', '南'],
  ['vvvl', '北'],
  ['vvl', '図面用', '-'],
  ['vvel', '北面'],
  ['vt', '断面図 (建築断面)', '-'],
  ['vvl', '作業用', '-'],
  ['vvet', 'B断面'],
  ['vvel', 'A断面'],
  ['vl', '製図ビュー (詳細)', '-'],
  ['vel', '作業用', '-'],
  ['veel', '方位記号'],
  ['t', '凡例', '', 'legend'],
  ['t', '集計表/数量 (すべて)', '+', 'schedule'],
  ['t', 'シート (すべて)', '', 'sheet'],
  ['t', 'ファミリ', '+', 'family'],
  ['t', 'グループ', '+', 'group'],
  ['l', 'Revit リンク', '', 'link'],
];

/* ---------- parts ---------- */

const RibbonTool = ({ icon, label, width, mode }) => (
  <Tool $w={width} $kana={isKana(label)} disabled={mode === 'off'}>
    {art[icon]}
    <ToolLabel>{label}</ToolLabel>
    {mode === 'menu' && <ToolArrow><Caret size={6} /></ToolArrow>}
  </Tool>
);

const TreeItem = ({ row: [kinds, label, toggle, icon] }) => (
  <TreeRow>
    {kinds.split('').map((kind, i) => (
      <Guide key={i} $kind={kind}>
        {toggle && i === kinds.length - 1 && (
          <Expander aria-label={label}>
            <svg width="7" height="7" viewBox="0 0 7 7" stroke="#27408b" strokeWidth="1.500">
              <path d={toggle === '+' ? 'M0 3.500h7M3.500 0v7' : 'M0 3.500h7'} />
            </svg>
          </Expander>
        )}
      </Guide>
    ))}
    <TreeLabel $icon={Boolean(icon)} $selected={label === '配置図ビュー'}>
      {icon && treeArt[icon]}
      {label}
    </TreeLabel>
  </TreeRow>
);

const PlanIcon = ({ faded }) => (
  <svg width="20" height="18" viewBox="0 0 20 18" fill={faded ? '#d3d5da' : '#e3e6ec'} stroke={faded ? '#94979d' : '#5b5f68'} strokeWidth="1.400" aria-hidden="true">
    <path d="M1 1h11v15H1z" />
    <path d="M12 3h4l3 4v10H8V7h4z" />
    <path d="M8 7h8v6" fill="none" strokeDasharray="2 1.300" />
  </svg>
);

const PlanDrawing = () => (
  <Drawing viewBox="398 230 982 750" preserveAspectRatio="xMaxYMin slice">
    <path d="M438 384.500h48M534 384.500h846M438 714.500h48M534 714.500h846" strokeWidth="1.200" strokeDasharray="190 48 48 48" />
    <path d="M704 452l251 250" stroke="#e4e4e4" strokeDasharray="5 5" />
    <path d="M762 932V509" stroke="#3a3a3a" strokeWidth="1.400" />
    <path d="M762 509.500h423" stroke="#101010" strokeWidth="1.400" />
    <path d="M955 702l62 62" stroke="#999" strokeWidth="1.600" />
    <path d="M1380 316L716 980" strokeWidth="2.600" />
    <path d="M1380 430.500h-66l-145 145-24-24" strokeWidth="3" />
    <path d="M1148 549l25 24M1146 557l-83 84M893 810l-85 85" strokeWidth="2" />
    <path d="M803 892l25 25-62 63" strokeWidth="3" />
    <path d="M802 896l24 24" strokeWidth="1.200" />
    <path d="M807 980l45-45 45 45M857 941l-39 39M834 964l16 16" strokeWidth="1.500" />
  </Drawing>
);

const NavigationArt = () => (
  <svg width="36" height="127" viewBox="0 0 36 127" fill="none" stroke="#9a9a9a" strokeWidth="1.500" aria-hidden="true">
    <circle cx="29" cy="6" r="4" />
    <path d="M27 4l4 4M31 4l-4 4" />
    <path d="M15 20h11v11a11 11 0 1 1-11-11z" fill="#e9ebf2" />
    <circle cx="15" cy="31" r="5" fill="#fff" />
    <text x="18" y="46" fontFamily="Liberation Sans" fontWeight="700" fontSize="11" fill="#5c97cf" stroke="none">2D</text>
    <path d="M15 54h6l-3 3z" fill="#888" stroke="none" />
    <path d="M2 63h32" stroke="#d0d0d0" />
    <path d="M9 77v-3h3M17 74h3v3M9 82v3h3M10 75l9 9M19 75l-9 9" strokeDasharray="3 1" />
    <rect x="17" y="82" width="7" height="7" rx="2" fill="#f4f4f4" />
    <path d="M24 89l4 4" strokeWidth="2" />
    <path d="M15 104h6l-3 3z" fill="#888" stroke="none" />
    <circle cx="29" cy="120" r="4" />
    <path d="M26 120h6" />
  </svg>
);

const App = () => (
  <Page>
    <GlobalStyle />
    <Window>
      <TitleBar>
        <QuickAccess>
          {quickItems.map((item, i) => {
            if (item === '|') return <QuickDivider key={i} />;
            if (item === '>') return <QuickButton key={i} $arrow aria-label="menu"><Caret size={6} /></QuickButton>;
            return <QuickButton key={i} $spaced={item === 'box'} aria-label={item}>{quick[item]}</QuickButton>;
          })}
        </QuickAccess>
        <Title>Autodesk Revit 2020.2 - 二上Exercise0307(2015) - 平面図: 配置図ビュー</Title>
        <Account>
          <svg width="5" height="8" viewBox="0 0 5 8" aria-hidden="true"><path d="M5 0v8L0 4z" fill="#333" /></svg>
          <Small>
            <path d="M3 7l1-5h4v17H1v-8zM12 2h4l1 5 2 4v8h-7zM8 6h4v6H8z" fill="#f2f2f2" stroke="#333" />
            <path d="M1 12h7M12 12h7" stroke="#333" />
          </Small>
          <AccountButton>
            <Small>
              <path d="M1 18q0-4 6-5V11Q4 9 5 5q1-4 5-4t5 4q1 4-2 6v2q6 1 6 5z" fill="#5e8fe8" stroke="#27396b" />
            </Small>
            futakamisho
          </AccountButton>
        </Account>
      </TitleBar>

      <Tabs>
        {tabs.map(([label, w]) => (
          <Tab key={label} $w={w} $kana={isKana(label)} $file={label === 'ファイル'} $active={label === '作成'}>{label}</Tab>
        ))}
        <TabToggle aria-label="ribbon">
          <svg width="18" height="12" viewBox="0 0 18 12" fill="#e6e6e6" stroke="#555" strokeWidth="1.300"><rect x="1" y="1" width="16" height="10" rx="3" /><path d="M6 8h6L9 5z" fill="#333" stroke="none" /></svg>
          <Caret size={6} />
        </TabToggle>
      </Tabs>

      <Ribbon>
        <RibbonPanel $w={61}>
          <PanelTools>
            <ModifyTool $w={45}>
              {art.arrow}
              <ToolLabel>修正</ToolLabel>
            </ModifyTool>
          </PanelTools>
          <PanelName>選択 <Caret /></PanelName>
        </RibbonPanel>
        <RibbonPanel $w={96}>
          <PropertyTools>
            {propertyArt.map((icon, i) => (
              <PropertyTool key={i} $active={i === 2} aria-label={`property ${i + 1}`}>{icon}</PropertyTool>
            ))}
          </PropertyTools>
          <PanelName>プロパティ</PanelName>
        </RibbonPanel>
        {panels.map((panel) => (
          <RibbonPanel key={panel.name} $w={panel.w} $last={panel.last}>
            <PanelTools>
              {panel.tools.map(([icon, label, width, mode]) => (
                <RibbonTool key={icon} icon={icon} label={label} width={width} mode={mode} />
              ))}
            </PanelTools>
            <PanelName $kana={isKana(panel.name)} $accent={panel.accent}>{panel.name}</PanelName>
          </RibbonPanel>
        ))}
      </Ribbon>
      <OptionsBar />

      <Workspace>
        <Browser>
          <PanelHeader>
            プロジェクト ブラウザ - 二上Exercise...
            <CloseButton aria-label="close browser"><Cross /></CloseButton>
          </PanelHeader>
          <Tree>
            {rows.map((row, i) => <TreeItem key={i} row={row} />)}
          </Tree>
        </Browser>

        <View>
          <DocumentTabs>
            <DocumentTab $w={151}><PlanIcon faded />設計GL</DocumentTab>
            <DocumentTab $w={152} $active><PlanIcon />配置図ビュー<Cross /></DocumentTab>
            <TabMenu aria-label="view list">
              <svg width="12" height="10" viewBox="0 0 12 10" aria-hidden="true"><path d="M2 0h9v2H2zM2 4h9L6.500 9z" fill="#222" /></svg>
            </TabMenu>
          </DocumentTabs>
          <ViewBody>
            <Canvas>
              <PlanDrawing />
              <NavigationBar><NavigationArt /></NavigationBar>
            </Canvas>
            <VerticalScroll>
              <Chevron d="M1 7l4-4 4 4" size={8} />
              <Thumb />
              <Chevron d="M1 3l4 4 4-4" size={8} />
            </VerticalScroll>
          </ViewBody>
          <ViewControls>
            <Scale>1 : 100</Scale>
            {viewArt}
            <HorizontalScroll>
              <Chevron d="M7 1L3 5l4 4" size={8} />
              <Thumb />
              <Chevron d="M3 1l4 4-4 4" size={8} />
            </HorizontalScroll>
            <svg width="12" height="12" viewBox="0 0 12 12" fill="#b4b4b4" aria-hidden="true"><path d="M8 0h2v2H8zM4 4h2v2H4zM8 4h2v2H8zM0 8h2v2H0zM4 8h2v2H4zM8 8h2v2H8z" /></svg>
          </ViewControls>
        </View>

        <Properties>
          <PanelHeader $tight>
            プロパティ
            <CloseButton aria-label="close properties"><Cross /></CloseButton>
          </PanelHeader>
          <TypeSelector aria-label="type">
            <svg width="78" height="78" viewBox="0 0 78 78" aria-hidden="true">
              <rect x="0.500" y="0.500" width="77" height="77" fill="#f0f0f0" stroke="#d6d6d6" />
              <path d="M4 4h66v40L4 46z" fill="#e4e4e4" />
              <path d="M4 46l30-1 38 8v20H4z" fill="#f6f6f6" />
              <text x="41" y="58" textAnchor="middle" fontFamily="Liberation Sans" fontWeight="700" fontSize="70" fill="#929292">R</text>
              <path d="M20 10v48l6-1V16z" fill="#7a7a7a" />
            </svg>
            <Caret color="#777" />
          </TypeSelector>
          <FamilyRow>
            <FamilyBox>
              <FamilySelect aria-label="family" defaultValue="floor">
                <option value="floor">ファミリ: 床</option>
              </FamilySelect>
              <Chevron d="M1 3l4 4 4-4" color="#666" w={1.2} />
            </FamilyBox>
            <EditType>
              <Small size={11}><path d="M1 1h8v7H1zM12 1h7v7h-7zM1 11h8v8H1zM12 11h7v8h-7zM4 4h12v11" stroke="#999" strokeWidth="2" /></Small>
              タイプ編集
            </EditType>
          </FamilyRow>
          <PropertyArea>
            <PropertyTable>
              <thead>
                <tr>
                  <th colSpan="2">
                    拘束
                    <svg width="5" height="7" viewBox="0 0 5 7" fill="none" stroke="#444" aria-hidden="true"><path d="M.5 3l2-2 2 2M.5 6l2-2 2 2" /></svg>
                  </th>
                </tr>
              </thead>
              <tbody>
                <tr>
                  <th><label htmlFor="host">ホスト</label></th>
                  <td><CellInput id="host" /></td>
                </tr>
              </tbody>
            </PropertyTable>
          </PropertyArea>
          <PropertiesFooter>
            <HelpLink href="#help">プロパティ ヘルプ</HelpLink>
            <ApplyButton disabled>適用</ApplyButton>
          </PropertiesFooter>
        </Properties>
      </Workspace>

      <StatusBar>
        選択＝クリック、次へ＝[Tab]、追加＝[Ctrl]、選択解除＝[Shift]。
        <StatusTools>
          {statusArt}
          <FilterCount>:0</FilterCount>
        </StatusTools>
      </StatusBar>

      <Taskbar>
        <TaskGroup>
          <TaskButton aria-label="start">
            <svg width="20" height="20" viewBox="0 0 20 20" fill="#fff"><path d="M0 3l8-1v7.500H0zM9 2l11-2v9.500H9zM0 10.500h8V18l-8-1zM9 10.500h11V20L9 18z" /></svg>
          </TaskButton>
          <TaskButton aria-label="search">
            <svg width="20" height="20" viewBox="0 0 20 20" fill="none" stroke="#fff" strokeWidth="3"><circle cx="10" cy="10" r="8" /></svg>
          </TaskButton>
          <TaskButton aria-label="task view">
            <svg width="20" height="20" viewBox="0 0 20 20" fill="none" stroke="#fff" strokeWidth="1.600"><path d="M1 0v3h12V0M1 20v-3h12v3M1 6h12v8H1zM17.500 0v4M17.500 11v9" /><path d="M16 6h3v3h-3z" fill="#fff" stroke="none" /></svg>
          </TaskButton>
          <TaskButton aria-label="explorer">
            <svg width="28" height="22" viewBox="0 0 28 22"><path d="M1 1h10l2 3h14v17H1z" fill="#f6d77a" /><path d="M1 6h26v15H1z" fill="#fbe49a" /><path d="M6 21v-8q0-2 2-2h12q2 0 2 2v8h-4v-5h-8v5z" fill="#2fa0e0" /></svg>
          </TaskButton>
          <TaskButton $running $active aria-label="revit">
            <svg width="30" height="30" viewBox="0 0 30 30"><path d="M0 0h30v30H0z" fill="#dcebf8" /><path d="M0 20L30 8v22H0z" fill="#bfdcf3" /><text x="15" y="24.500" textAnchor="middle" fontFamily="Liberation Sans" fontWeight="700" fontSize="27" fill="#1c5fa6" stroke="#1c5fa6">R</text></svg>
          </TaskButton>
          <TaskButton $running aria-label="pointer tool">
            <svg width="28" height="28" viewBox="0 0 28 28"><circle cx="14" cy="14" r="13.500" fill="#fff200" /></svg>
          </TaskButton>
          <TaskButton $running aria-label="recorder">
            <svg width="28" height="28" viewBox="0 0 28 28" fill="none" stroke="#d6d6d6" strokeWidth="2"><circle cx="14" cy="14" r="12.500" fill="#262428" /><path d="M8 6q-1 6 6 8M14 14q5-3 9 1M14 14q0 7-6 8M10 5q3-1 4 9" strokeWidth="1.600" /></svg>
          </TaskButton>
        </TaskGroup>
        <Tray>
          <TrayButton aria-label="hidden icons">
            <svg width="20" height="10" viewBox="0 0 20 10" fill="none" stroke="#fff" strokeWidth="1.800"><path d="M1 9l7-7 7 7" /></svg>
          </TrayButton>
          <TrayButton aria-label="keyboard">
            <svg width="28" height="17" viewBox="0 0 28 17" fill="none" stroke="#fff" strokeWidth="1.600"><path d="M1 1h26v15H1z" /><path d="M3 5h22M3 8.500h22" strokeDasharray="2 1.200" strokeWidth="2" /><path d="M3 12.500h3M8 12.500h12M22 12.500h3" strokeWidth="2" /></svg>
          </TrayButton>
          <TrayButton aria-label="offline">
            <svg width="18" height="18" viewBox="0 0 18 18"><circle cx="9" cy="9" r="9" fill="#8c9497" /><path d="M5 5l8 8M13 5l-8 8" stroke="#04141b" strokeWidth="2" /></svg>
          </TrayButton>
          <TrayButton aria-label="notifications">
            <svg width="34" height="34" viewBox="0 0 34 34">
              <path d="M4 5h20v17H11v4l-4-4H4z" fill="#fff" />
              <path d="M8 10h12M8 14h12M8 18h8" stroke="#04141b" strokeWidth="1.500" />
              <circle cx="22" cy="24" r="10.500" fill="#2a3236" stroke="#b6bcbe" strokeWidth="1.500" />
              <text x="22" y="28.500" textAnchor="middle" fontFamily="Open Sans" fontWeight="700" fontSize="13" fill="#fff">23</text>
            </svg>
          </TrayButton>
          <ShowDesktop />
        </Tray>
      </Taskbar>

      <Pointer $top={37} $left={83} width="30" height="34" viewBox="0 0 30 34">
        <circle cx="11" cy="12" r="11" fill="#ffe800" opacity="0.7" />
        <path d="M11 11v16l4-4 3 7 3-1-3-7h5z" fill="#fff" stroke="#999" />
      </Pointer>
      <Highlight $top={29} $left={61} $w={64} $h={41} />
      <Highlight $top={52} $left={149} $w={335} $h={132} />
      <Pointer $top={134} $left={179} width="24" height="56" viewBox="0 0 24 56" fill="none" stroke="#ff1400" strokeWidth="2">
        <path d="M12 1v53M1 15L12 2l11 13" />
      </Pointer>
    </Window>
    <Caption>玄関ポーチを作成します</Caption>
  </Page>
);

export default App;
